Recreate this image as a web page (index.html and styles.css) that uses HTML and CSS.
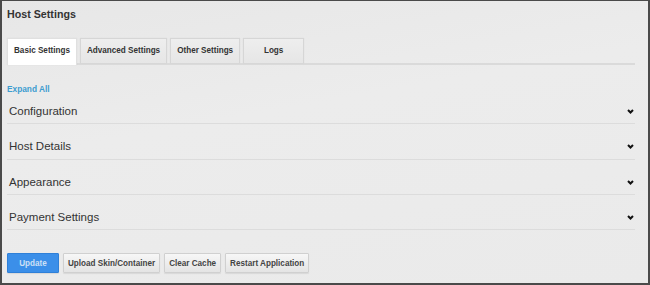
FILE: index.html
```html
<!DOCTYPE html>
<html>
<head>
<meta charset="utf-8">
<link rel="stylesheet" href="styles.css">
</head>
<body>
<div class="frame">
  <h1 class="title">Host Settings</h1>
  <div class="tabs">
    <div class="tab active">Basic Settings</div>
    <div class="tab">Advanced Settings</div>
    <div class="tab">Other Settings</div>
    <div class="tab">Logs</div>
  </div>
  <a class="expand">Expand All</a>
  <div class="sections">
    <div class="row"><span>Configuration</span><svg class="chev" viewBox="0 0 7 5" width="7" height="5"><polyline points="1,1 3.5,3.5 6,1"/></svg></div>
    <div class="row"><span>Host Details</span><svg class="chev" viewBox="0 0 7 5" width="7" height="5"><polyline points="1,1 3.5,3.5 6,1"/></svg></div>
    <div class="row"><span>Appearance</span><svg class="chev" viewBox="0 0 7 5" width="7" height="5"><polyline points="1,1 3.5,3.5 6,1"/></svg></div>
    <div class="row"><span>Payment Settings</span><svg class="chev" viewBox="0 0 7 5" width="7" height="5"><polyline points="1,1 3.5,3.5 6,1"/></svg></div>
  </div>
  <div class="actions">
    <button class="btn primary">Update</button>
    <button class="btn">Upload Skin/Container</button>
    <button class="btn">Clear Cache</button>
    <button class="btn">Restart Application</button>
  </div>
</div>
</body>
</html>
```
FILE: styles.css
```css
html, body {
  margin: 0;
  padding: 0;
}
body {
  font-family: "Liberation Sans", Arial, sans-serif;
  color: #333;
}
.frame {
  box-sizing: border-box;
  width: 650px;
  height: 285px;
  border-style: solid;
  border-color: #4a4a4a;
  border-width: 1px 2px 2px 2px;
  background: linear-gradient(170deg, #e7e7e7 0%, #ececec 40%, #eaeaea 100%);
  padding: 0 13px 0 5px;
  display: flex;
  flex-direction: column;
}
.title {
  margin: 7px 0 0 0;
  font-size: 10.7px;
  line-height: 13px;
  font-weight: bold;
  color: #333;
}
.tabs {
  margin-top: 17px;
  display: flex;
  gap: 3px;
  border-bottom: 2px solid #dadada;
  height: 25px;
}
.tab {
  box-sizing: border-box;
  height: 25px;
  min-width: 61px;
  padding: 0 6px;
  font-size: 8.15px;
  font-weight: bold;
  line-height: 23px;
  text-align: center;
  color: #333;
  background: linear-gradient(#eeeeee, #e6e6e6);
  border: 1px solid #d6d6d6;
  border-bottom: none;
  box-shadow: 0 0 1px rgba(0,0,0,0.08);
}
.tab.active {
  background: #ffffff;
  height: 27px;
  border-color: #e0e0e0;
}
.expand {
  margin-top: 19px;
  font-size: 8.3px;
  line-height: 10px;
  font-weight: bold;
  color: #3d9dd0;
}
.sections {
  display: flex;
  flex-direction: column;
}
.row {
  display: flex;
  justify-content: space-between;
  align-items: center;
  padding: 16px 1px 5.33px 2px;
  font-size: 11.5px;
  line-height: 13px;
  color: #333;
  border-bottom: 1px solid #dcdcdc;
}
.row:first-child {
  padding-top: 11px;
}
.chev {
  fill: none;
  stroke: #111;
  stroke-width: 2;
}
.actions {
  margin-top: 23px;
  display: flex;
  gap: 4px;
}
.btn {
  box-sizing: border-box;
  height: 20px;
  padding: 0 4px;
  font-family: "Liberation Sans", Arial, sans-serif;
  font-size: 8.15px;
  font-weight: bold;
  color: #444;
  background: linear-gradient(#f7f7f7, #e4e4e4);
  border: 1px solid #d0d0d0;
  border-radius: 1px;
  box-shadow: 0 1px 1px rgba(0,0,0,0.08);
}
.btn.primary {
  width: 52px;
  background: #3b8fe9;
  border-color: #2f80d8;
  color: #cde0f6;
}
```
